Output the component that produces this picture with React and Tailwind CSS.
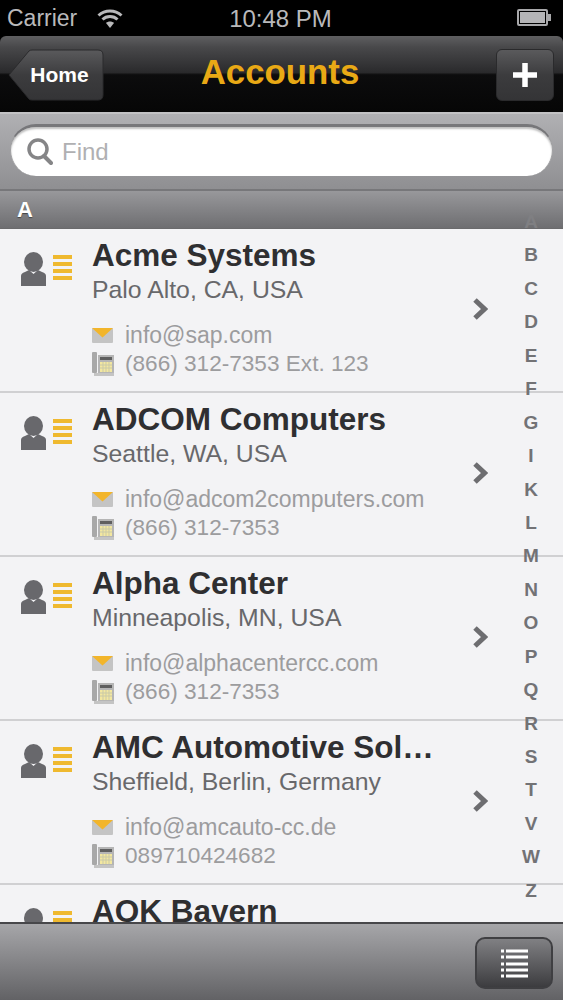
const rows = [
  { name: "Acme Systems", place: "Palo Alto, CA, USA", mail: "info@sap.com", phone: "(866) 312-7353 Ext. 123" },
  { name: "ADCOM Computers", place: "Seattle, WA, USA", mail: "info@adcom2computers.com", phone: "(866) 312-7353" },
  { name: "Alpha Center", place: "Minneapolis, MN, USA", mail: "info@alphacentercc.com", phone: "(866) 312-7353" },
  { name: "AMC Automotive Sol…", place: "Sheffield, Berlin, Germany", mail: "info@amcauto-cc.de", phone: "089710424682" },
  { name: "AOK Bayern" },
];
const letters = ["A","B","C","D","E","F","G","I","K","L","M","N","O","P","Q","R","S","T","V","W","Z"];

function Person() {
  return (
    <svg width="26" height="34" viewBox="0 0 26 34" className="block">
      <ellipse cx="12.5" cy="10" rx="9.5" ry="10" fill="#68686c" />
      <path d="M0 34V24C0 22 1 21 4 20L8 18L12.5 22L17 18L21 20C24 21 25 22 25 24V34Z" fill="#68686c" />
    </svg>
  );
}
function Lines() {
  return (
    <div className="flex flex-col gap-[3px] w-[19px] mt-[3px]">
      <div className="h-[4px] bg-[#efb92f]" />
      <div className="h-[4px] bg-[#efb92f]" />
      <div className="h-[4px] bg-[#efb92f]" />
      <div className="h-[4px] bg-[#efb92f]" />
    </div>
  );
}
function Mail() {
  return (
    <svg width="21" height="15" viewBox="0 0 21 15" className="block">
      <rect width="21" height="15" rx="1" fill="#c4c4c4" />
      <path d="M0 0H21L10.5 9.5Z" fill="#f2b52b" />
    </svg>
  );
}
function Phone() {
  return (
    <svg width="22" height="24" viewBox="0 0 22 24" className="block">
      <rect x="0" y="0" width="5" height="21" rx="1" fill="#a8a8a8" />
      <rect x="2" y="21" width="20" height="3" fill="#c4c4c4" />
      <rect x="6" y="3" width="16" height="18" fill="#b5b5b5" />
      <rect x="8" y="5" width="12" height="3" fill="#5f5f5f" />
      <rect x="8" y="10" width="12" height="10" fill="#f3e7a0" />
      <path d="M8 13H20M8 16H20M11 10V20M14 10V20M17 10V20" stroke="#c9c9a8" strokeWidth="1" />
    </svg>
  );
}
function Row({ r }) {
  return (
    <div className="h-[164px] shrink-0 border-b-2 border-[#d0d0d2] bg-[#f3f3f5] flex relative">
      <div className="w-[92px] pl-[21px] pt-[23px] flex gap-[6px] items-start shrink-0">
        <Person />
        <Lines />
      </div>
      <div className="flex-1 min-w-0 pt-[8px]">
        <div className="text-[31.5px] leading-[36px] font-bold text-[#2f2f31] whitespace-nowrap">{r.name}</div>
        {r.place && (
          <>
            <div className="text-[24.8px] leading-[30px] text-[#68686b] mt-[2px] whitespace-nowrap">{r.place}</div>
            <div className="flex items-center gap-[12px] mt-[15px] h-[30px] text-[23px] text-[#9c9c9e] whitespace-nowrap">
              <Mail />
              <span>{r.mail}</span>
            </div>
            <div className="flex items-center gap-[11px] mt-[-1px] h-[30px] text-[22.6px] text-[#9c9c9e] whitespace-nowrap">
              <Phone />
              <span>{r.phone}</span>
            </div>
          </>
        )}
      </div>
      {r.place && (
        <svg width="16" height="24" viewBox="0 0 16 24" className="absolute left-[472px] top-[68px]">
          <path d="M3 3L12.5 12L3 21" fill="none" stroke="#6d6d70" strokeWidth="5" />
        </svg>
      )}
    </div>
  );
}

export default function App() {
  return (
    <div className="relative w-[563px] h-[1000px] overflow-hidden flex flex-col bg-black font-['Liberation_Sans',Arial,sans-serif]">
      <div className="h-[36px] shrink-0 relative flex items-center justify-center text-[#b9b9bb] text-[23px]">
        <div className="absolute left-[7px] top-[3px] flex items-center gap-[20px]">
          <span className="leading-[30px]">Carrier</span>
          <svg width="26" height="21" viewBox="0 0 26 21">
            <path d="M1.5 7.5C8 1.5 18 1.5 24.5 7.5M5.5 11.5C9.5 7.5 16.5 7.5 20.5 11.5" fill="none" stroke="#b9b9bb" strokeWidth="3" />
            <path d="M9 15C11 13 15 13 17 15L13 20Z" fill="#b9b9bb" />
          </svg>
        </div>
        <span className="leading-[30px] mt-[1px] ml-[-2px] text-[24px]">10:48 PM</span>
        <div className="absolute left-[517px] top-[9px] flex items-center">
          <div className="w-[31px] h-[17px] border-2 border-[#a8a8aa] rounded-[2px] p-[1px]">
            <div className="w-full h-full bg-[#b5b5b7]" />
          </div>
          <div className="w-[3px] h-[7px] bg-[#a8a8aa]" />
        </div>
      </div>

      <div className="h-[76px] shrink-0 rounded-t-[6px] relative flex items-center justify-between pl-[8px] pr-[9px] bg-[linear-gradient(to_bottom,#5f5f61_0%,#48484a_15%,#2a2a2c_48%,#0c0c0d_51%,#060606_100%)]">
        <div className="relative w-[96px] h-[52px] mt-[2px] flex items-center justify-center pl-[7px] text-white font-bold text-[21px]">
          <svg width="96" height="52" viewBox="0 0 96 52" className="absolute left-0 top-0">
            <defs>
              <linearGradient id="bk" x1="0" y1="0" x2="0" y2="1">
                <stop offset="0" stopColor="#5a5a5c" />
                <stop offset="0.5" stopColor="#3c3c3e" />
                <stop offset="1" stopColor="#343436" />
              </linearGradient>
            </defs>
            <path d="M1 26L21 2Q22 1 24 1H90Q95 1 95 6V46Q95 51 90 51H24Q22 51 21 50Z" fill="url(#bk)" stroke="#2a2a2c" />
          </svg>
          <span className="relative">Home</span>
        </div>
        <div className="absolute inset-x-0 top-[14px] text-center ml-[-3px] text-[#e9a915] font-bold text-[34.8px] leading-[44px]">Accounts</div>
        <div className="relative w-[58px] h-[52px] mt-[2px] rounded-[6px] border border-[#2a2a2c] bg-[linear-gradient(to_bottom,#5a5a5c,#3c3c3e_50%,#343436)] flex items-center justify-center">
          <svg width="24" height="24" viewBox="0 0 24 24">
            <path d="M12 0V24M0 12H24" stroke="#fff" strokeWidth="5.5" />
          </svg>
        </div>
      </div>

      <div className="h-[79px] shrink-0 border-t-2 border-[#c2c2c4] border-b-2 border-b-[#77777a] bg-[linear-gradient(to_bottom,#b0b0b3,#8f8f92)] px-[10px] pt-[10px]">
        <div className="h-[52px] rounded-full bg-white border-t-[3px] border-[#77777a] border-x border-x-[#a0a0a2] flex items-center pl-[16px] shadow-[inset_0_2px_2px_rgba(0,0,0,0.25)]">
          <svg width="26" height="28" viewBox="0 0 26 28">
            <circle cx="11" cy="11" r="9" fill="none" stroke="#858587" strokeWidth="3.5" />
            <path d="M17 18L24 25" stroke="#858587" strokeWidth="4" strokeLinecap="round" />
          </svg>
          <span className="ml-[9px] text-[#b0b0b2] text-[24px] leading-none">Find</span>
        </div>
      </div>

      <div className="h-[38px] shrink-0 border-b border-[#6a6a6c] bg-[linear-gradient(to_bottom,#98989b,#6e6e71)] pl-[17px] flex items-center text-white font-bold text-[22px] [text-shadow:0_1px_1px_#444]">
        A
      </div>

      <div className="flex-1 min-h-0 overflow-hidden flex flex-col bg-[#f3f3f5]">
        {rows.map((r) => (
          <Row key={r.name} r={r} />
        ))}
      </div>

      <div className="h-[78px] shrink-0 border-t-2 border-[#47474a] bg-[linear-gradient(to_bottom,#a6a6a9,#626265)] flex items-start justify-end pr-[10px] pt-[13px]">
        <div className="w-[78px] h-[52px] rounded-[10px] border-2 border-[#3f3f42] bg-[linear-gradient(to_bottom,#808083,#3c3c3f)] flex items-center justify-center">
          <svg width="27" height="29" viewBox="0 0 27 29">
            <path d="M0 2H3M5 2H27M0 8H3M5 8H27M0 15H3M5 15H27M0 21H3M5 21H27M0 27H3M5 27H27" stroke="#fff" strokeWidth="3" />
          </svg>
        </div>
      </div>

      <div className="absolute left-[512px] top-[205px] w-[38px] flex flex-col items-center text-[#727275] font-bold text-[19px]">
        {letters.map((l, i) => (
          <div key={l} className={"h-[33.45px] leading-[33.45px] " + (i === 0 ? "text-[#7f7f82]" : "")}>{l}</div>
        ))}
      </div>
    </div>
  );
}
